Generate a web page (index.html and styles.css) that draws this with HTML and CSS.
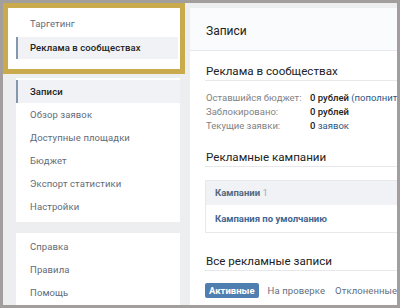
FILE: index.html
```html
<!DOCTYPE html>
<html lang="ru">
<head>
<meta charset="utf-8">
<link rel="stylesheet" href="styles.css">
</head>
<body>
<div class="frame">
  <div class="left">
    <div class="gold">
      <div class="nav-item">Таргетинг</div>
      <div class="nav-item active gap">Реклама в сообществах</div>
    </div>
    <div class="card menu">
      <div class="nav-item active">Записи</div>
      <div class="nav-item">Обзор заявок</div>
      <div class="nav-item">Доступные площадки</div>
      <div class="nav-item">Бюджет</div>
      <div class="nav-item">Экспорт статистики</div>
      <div class="nav-item">Настройки</div>
    </div>
    <div class="card menu bottom">
      <div class="nav-item">Справка</div>
      <div class="nav-item">Правила</div>
      <div class="nav-item">Помощь</div>
    </div>
  </div>
  <div class="main">
    <div class="main-head">Записи</div>
    <div class="section">
      <div class="heading">Реклама в сообществах</div>
      <div class="info">
        <div class="label">Оставшийся бюджет:</div>
        <div class="value">0 рублей <a class="link">(пополнить)</a></div>
        <div class="label">Заблокировано:</div>
        <div class="value">0 рублей</div>
        <div class="label">Текущие заявки:</div>
        <div class="value">0 <a class="link">заявок</a></div>
      </div>
      <div class="heading h2">Рекламные кампании</div>
      <div class="table">
        <div class="thead">Кампании <span class="count">1</span></div>
        <div class="trow">Кампания по умолчанию</div>
      </div>
      <div class="heading h3">Все рекламные записи</div>
      <div class="tabs">
        <span class="tab on">Активные</span>
        <span class="tab">На проверке</span>
        <span class="tab">Отклоненные</span>
      </div>
    </div>
  </div>
</div>
</body>
</html>
```

FILE: styles.css
```css
html, body {
  margin: 0;
  padding: 0;
}
body {
  width: 400px;
  height: 308px;
  background: #a29e9e;
  font-family: Roboto, "Liberation Sans", sans-serif;
  font-size: 9.5px;
  overflow: hidden;
}
.frame {
  margin: 3px;
  width: 394px;
  height: 302px;
  background: #edeef0;
  display: flex;
  overflow: hidden;
}
.left {
  width: 164px;
  flex: none;
  padding-left: 13px;
  display: flex;
  flex-direction: column;
}
.gold {
  margin: 0 -5px 0 -13px;
  border: 5px solid #c9aa4c;
  background: #fff;
  padding: 5px 0 10px 8px;
}
.card {
  background: #fff;
}
.menu {
  margin-top: 4px;
  padding: 2px 0 4px;
}
.menu.bottom {
  margin-top: 11px;
  flex: 1;
}
.nav-item {
  height: 23px;
  line-height: 23px;
  padding-left: 12px;
  border-left: 2px solid transparent;
  color: #5f6b78;
  white-space: nowrap;
  letter-spacing: 0.1px;
}
.gold .nav-item {
  height: 22px;
  line-height: 22px;
  margin-right: 2px;
}
.gold .gap {
  margin-top: 2px;
}
.nav-item.active {
  background: #f0f2f5;
  border-left-color: #8497ad;
  color: #222;
  font-weight: 500;
}
.main {
  flex: 1;
  margin: 5px 0 0 10px;
  background: #fff;
  min-width: 0;
}
.main-head {
  background: #fafbfc;
  padding: 15px 15px 11px 16px;
  line-height: 16px;
  font-size: 12px;
  color: #222;
  border-bottom: 1px solid #e7e8ec;
}
.section {
  padding: 11px 0 0 15px;
}
.heading {
  font-size: 11.6px;
  line-height: 18px;
  color: #222;
  border-bottom: 1px solid #e7e8ec;
  padding-left: 1px;
  white-space: nowrap;
}
.info {
  display: grid;
  grid-template-columns: 104px auto;
  margin-top: 10px;
  line-height: 14px;
  white-space: nowrap;
  padding-left: 1px;
}
.label {
  color: #828282;
}
.value {
  color: #222;
  font-weight: 500;
}
.link {
  color: #2a5885;
  font-weight: 400;
}
.h2 {
  margin-top: 15px;
}
.table {
  margin-top: 13px;
  border: 1px solid #e7e8ec;
  border-right: 0;
}
.thead {
  background: #f0f2f5;
  height: 24px;
  line-height: 24px;
  padding-left: 9px;
  font-weight: 700;
  color: #56687d;
}
.count {
  color: #a4acb6;
  font-weight: 400;
}
.trow {
  height: 27px;
  line-height: 27px;
  padding-left: 9px;
  font-weight: 700;
  color: #3f6590;
}
.h3 {
  margin-top: 19px;
}
.tabs {
  margin-top: 12px;
  display: flex;
  gap: 8px;
  white-space: nowrap;
}
.tab {
  line-height: 15px;
  color: #5f6f82;
  padding: 0 1px;
  letter-spacing: 0.1px;
}
.tab.on {
  background: #4f7eb0;
  color: #fff;
  font-weight: 700;
  padding: 0 4px;
  border-radius: 2px;
  letter-spacing: 0;
}
```
